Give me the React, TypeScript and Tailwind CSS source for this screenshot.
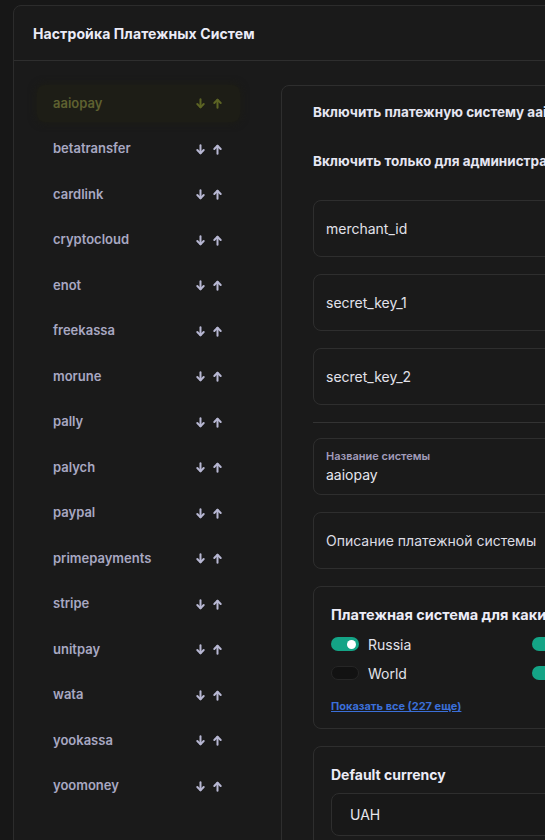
import React from "react";

const items = [
  "aaiopay",
  "betatransfer",
  "cardlink",
  "cryptocloud",
  "enot",
  "freekassa",
  "morune",
  "pally",
  "palych",
  "paypal",
  "primepayments",
  "stripe",
  "unitpay",
  "wata",
  "yookassa",
  "yoomoney",
];

function ArrowDownIcon({ className }: { className?: string }) {
  return (
    <svg viewBox="0 0 12 12" className={className} fill="none" stroke="currentColor" strokeWidth="2.2" strokeLinecap="round" strokeLinejoin="round">
      <path d="M6 1.5v8.5" />
      <path d="M2.5 6.5 6 10l3.5-3.5" />
    </svg>
  );
}

function ArrowUpIcon({ className }: { className?: string }) {
  return (
    <svg viewBox="0 0 12 12" className={className} fill="none" stroke="currentColor" strokeWidth="2.2" strokeLinecap="round" strokeLinejoin="round">
      <path d="M6 10.5V2" />
      <path d="M2.5 5.5 6 2l3.5 3.5" />
    </svg>
  );
}

function Toggle({ on }: { on: boolean }) {
  return on ? (
    <div className="w-[28px] h-[14px] rounded-full bg-[#14a486] flex items-center justify-end pr-[3px] shrink-0">
      <div className="w-[9px] h-[9px] rounded-full bg-white" />
    </div>
  ) : (
    <div className="w-[28px] h-[14px] rounded-full bg-[#121212] border border-[#262626] shrink-0" />
  );
}

export default function App() {
  return (
    <div
      className="w-[545px] h-[840px] overflow-hidden bg-[#171717] pl-[13px] pt-[5px]"
      style={{ fontFamily: "Inter, 'Noto Sans', sans-serif" }}
    >
      <div className="w-[960px] h-[900px] bg-[#1a1a1a] border border-[#2c2c2c] rounded-tl-lg">
        <div className="h-[55px] flex items-center px-[19px] border-b border-[#2e2e2e]">
          <h1 className="text-[14px] font-bold text-[#ebebf7] tracking-[0.1px]">Настройка Платежных Систем</h1>
        </div>
        <div className="flex pl-[23px] pt-[24px] gap-[41px]">
          <div className="w-[203px] shrink-0 flex flex-col gap-[8.5px]">
            {items.map((it, i) => {
              const active = i === 0;
              return (
                <div
                  key={it}
                  className={
                    "h-[37px] rounded-lg flex items-center pl-[16px] pr-[17px] " +
                    (active ? "bg-[#1d1d16] shadow-[0_0_8px_#1d1d14]" : "")
                  }
                >
                  <span className={"text-[13px] font-semibold flex-1 " + (active ? "text-[#5f6130]" : "text-[#a8a8c2]")}>
                    {it}
                  </span>
                  <div className={"flex items-center gap-[6px] " + (active ? "text-[#5c6424]" : "text-[#b7b7d2]")}>
                    <ArrowDownIcon className="w-[11px] h-[11px]" />
                    <ArrowUpIcon className="w-[11px] h-[11px]" />
                  </div>
                </div>
              );
            })}
          </div>
          <div className="w-[640px] shrink-0 border border-[#2e2e2e] rounded-lg bg-[#1a1a1a] pl-[31px] pt-[2px] pb-[20px]">
            <div className="h-[49px] flex items-center">
              <span className="text-[13.5px] font-bold text-[#e6e6f2] whitespace-nowrap">Включить платежную систему aaiopay</span>
            </div>
            <div className="h-[49px] flex items-center">
              <span className="text-[13.5px] font-bold text-[#e6e6f2] whitespace-nowrap">Включить только для администраторов</span>
            </div>
            <div className="mt-[14px] flex flex-col gap-[17px] pr-[24px]">
              {["merchant_id", "secret_key_1", "secret_key_2"].map((f) => (
                <div key={f} className="h-[57px] border border-[#2e2e2e] rounded-lg flex items-center px-[12px]">
                  <span className="text-[14px] text-[#e2e2ea]">{f}</span>
                </div>
              ))}
              <div className="h-px bg-[#333333] -mb-[2px]" />
              <div className="h-[57px] border border-[#2e2e2e] rounded-lg flex flex-col justify-center px-[12px]">
                <span className="text-[11px] font-semibold text-[#a29cba] leading-[14px]">Название системы</span>
                <span className="text-[14px] text-[#e6e6ee] leading-[20px] mt-[2px]">aaiopay</span>
              </div>
              <div className="h-[57px] border border-[#2e2e2e] rounded-lg flex items-center px-[12px]">
                <span className="text-[14px] text-[#dcdce4]">Описание платежной системы</span>
              </div>
              <div className="h-[143px] border border-[#2e2e2e] rounded-lg px-[17px] pt-[18px]">
                <div className="text-[14.5px] font-bold text-[#ececf7] leading-[20px] whitespace-nowrap">
                  Платежная система для каких стран
                </div>
                <div className="mt-[9px] grid grid-cols-[201px_201px] gap-y-[9px]">
                  <div className="h-[20px] flex items-center gap-[9px]">
                    <Toggle on />
                    <span className="text-[14px] text-[#e2e2ea]">Russia</span>
                  </div>
                  <div className="h-[20px] flex items-center gap-[9px]">
                    <Toggle on />
                    <span className="text-[14px] text-[#e2e2ea]">Ukraine</span>
                  </div>
                  <div className="h-[20px] flex items-center gap-[9px]">
                    <Toggle on={false} />
                    <span className="text-[14px] text-[#e2e2ea]">World</span>
                  </div>
                  <div className="h-[20px] flex items-center gap-[9px]">
                    <Toggle on />
                    <span className="text-[14px] text-[#e2e2ea]">Kazakhstan</span>
                  </div>
                </div>
                <div className="mt-[13px] leading-[16px]">
                  <span className="text-[11px] font-bold text-[#3b6fd8] underline">Показать все (227 еще)</span>
                </div>
              </div>
              <div className="h-[120px] border border-[#2e2e2e] rounded-lg px-[17px] pt-[18px]">
                <div className="text-[14px] font-bold text-[#ececf7] leading-[20px]">Default currency</div>
                <div className="mt-[8px] h-[43px] border border-[#2e2e2e] rounded-lg bg-[#181818] flex items-center px-[18px]">
                  <span className="text-[14px] text-[#e6e6ee]">UAH</span>
                </div>
              </div>
            </div>
          </div>
        </div>
      </div>
    </div>
  );
}
